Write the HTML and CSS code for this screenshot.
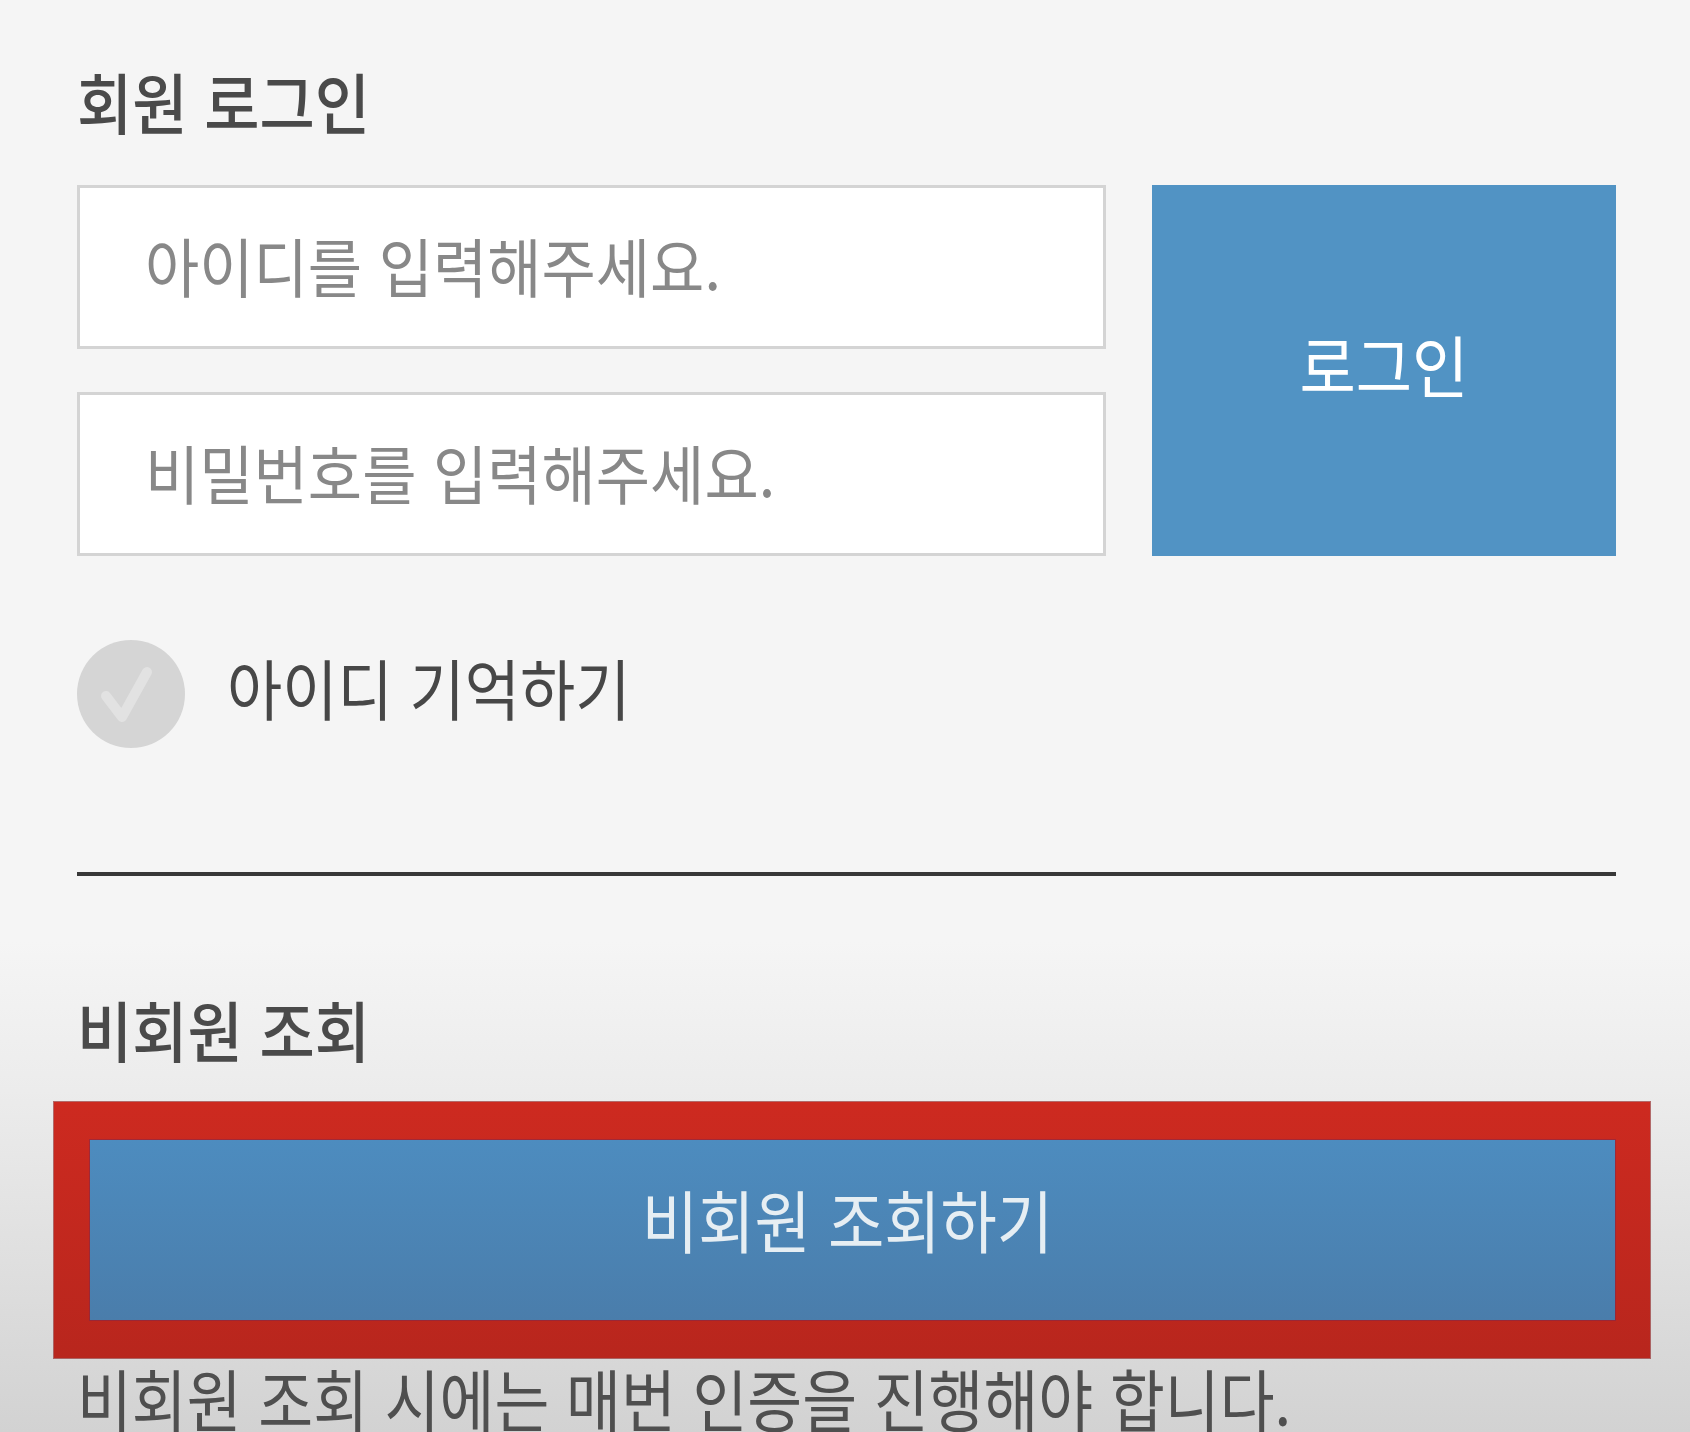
FILE: index.html
```html
<!DOCTYPE html>
<html lang="ko">
<head>
<meta charset="utf-8">
<title>회원 로그인</title>
<link rel="stylesheet" href="styles.css">
</head>
<body>
<main class="page">
  <h2 class="title"><span class="cond">회원 로그인</span></h2>
  <div class="login-row">
    <div class="fields">
      <div class="field"><span class="cond ph">아이디를 입력해주세요.</span></div>
      <div class="field"><span class="cond ph">비밀번호를 입력해주세요.</span></div>
    </div>
    <button class="btn-login"><span class="cond-c">로그인</span></button>
  </div>
  <div class="remember">
    <span class="check">
      <svg width="108" height="108" viewBox="0 0 108 108"><circle cx="54" cy="54" r="54" fill="#d5d5d5"/><path d="M29 56 L45 77 L70 32" fill="none" stroke="#e2e2e2" stroke-width="10" stroke-linecap="round" stroke-linejoin="round"/></svg>
    </span>
    <span class="cond remember-text">아이디 기억하기</span>
  </div>
  <hr class="divider">
  <h2 class="title title2"><span class="cond">비회원 조회</span></h2>
  <div class="highlight">
    <button class="btn-guest"><span class="cond-c">비회원 조회하기</span></button>
  </div>
  <p class="note"><span class="cond">비회원 조회 시에는 매번 인증을 진행해야 합니다.</span></p>
</main>
</body>
</html>
```
FILE: styles.css
```css
html, body {
  margin: 0;
  padding: 0;
}
body {
  width: 1690px;
  height: 1432px;
  overflow: hidden;
  background: linear-gradient(to bottom, #f5f5f5 0px, #f5f5f5 940px, #ececec 1090px, #d2d2d2 1432px);
  font-family: "Noto Sans CJK KR", "Noto Sans", sans-serif;
}
.page {
  padding: 62px 74px 0 77px;
}
.cond {
  display: inline-block;
  transform: scaleX(0.91);
  transform-origin: 0 50%;
  white-space: nowrap;
}
.cond-c {
  display: inline-block;
  transform: scaleX(0.9);
  transform-origin: 50% 50%;
  white-space: nowrap;
}
.title {
  margin: 0;
  font-size: 66px;
  font-weight: 500;
  line-height: 76px;
  color: #4a4a4a;
}
.login-row {
  display: flex;
  gap: 46px;
  margin-top: 47px;
}
.fields {
  display: flex;
  flex-direction: column;
  gap: 43px;
  width: 1029px;
}
.field {
  box-sizing: border-box;
  height: 164px;
  background: #fff;
  border: 3px solid #d4d4d4;
  padding-left: 65px;
  padding-bottom: 6px;
  display: flex;
  align-items: center;
}
.field .cond {
  transform: scaleX(0.922);
}
.ph {
  font-size: 64px;
  color: #888;
  line-height: 1;
}
.btn-login {
  flex: 1;
  border: 0;
  margin: 0;
  background: #5193c4;
  color: #fff;
  font-family: inherit;
  font-size: 68px;
  padding: 0 0 14px 0;
  line-height: 1;
}
.remember {
  display: flex;
  align-items: center;
  gap: 42px;
  margin-top: 84px;
  height: 108px;
}
.check {
  display: block;
  width: 108px;
  height: 108px;
}
.check svg {
  display: block;
}
.remember-text {
  font-size: 66px;
  color: #474747;
  line-height: 1;
  margin-bottom: 16px;
}
.divider {
  margin: 124px 0 0 0;
  border: 0;
  height: 4px;
  background: #383838;
}
.title2 {
  margin-top: 114px;
}
.highlight {
  margin: 36px -34px 0 -23px;
  padding: 38px 35px 38px 36px;
  background: linear-gradient(to bottom, #cd2a20, #b8261d);
  box-shadow: 0 0 0 1px rgba(140, 20, 20, 0.6);
}
.btn-guest {
  display: block;
  width: 100%;
  height: 180px;
  border: 0;
  margin: 0;
  background: linear-gradient(to bottom, #4d8cbf, #4a7dab);
  box-shadow: 0 0 0 1px rgba(120, 40, 80, 0.5);
  color: #e6eef3;
  font-family: inherit;
  font-size: 68px;
  line-height: 1;
  padding: 0 10px 22px 0;
}
.note {
  margin: 2px 0 0 0;
  font-size: 68px;
  line-height: 76px;
  color: #4f4f4f;
}
.note .cond {
  transform: scaleX(0.877);
}
```
